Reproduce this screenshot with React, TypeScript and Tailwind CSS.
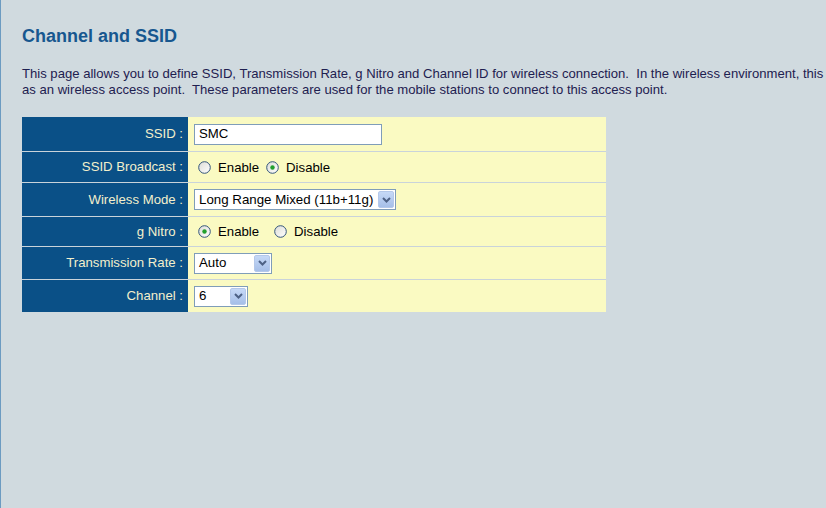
import React from 'react';

const font = "font-['Liberation_Sans',Arial,sans-serif]";

function Radio({ checked }: { checked?: boolean }) {
  return (
    <svg width="13" height="13" viewBox="0 0 13 13" className="shrink-0">
      <defs>
        <linearGradient id="rfill" x1="0" y1="0" x2="1" y2="1">
          <stop offset="0" stopColor="#dcdcd6" />
          <stop offset="1" stopColor="#ffffff" />
        </linearGradient>
      </defs>
      <circle cx="6.5" cy="6.5" r="5.8" fill="url(#rfill)" stroke="#33557a" strokeWidth="1" />
      {checked && <circle cx="6.5" cy="6.5" r="2.2" fill="#22a02c" />}
    </svg>
  );
}

function DropButton() {
  return (
    <div className="flex h-[17px] w-[16px] items-center justify-center rounded-[2px] border border-[#b4c8ea] bg-gradient-to-b from-[#c6d9f7] to-[#a6bfe8]">
      <svg width="9" height="6" viewBox="0 0 9 6">
        <path d="M1 1 L4.5 4.5 L8 1" fill="none" stroke="#4d6185" strokeWidth="2" />
      </svg>
    </div>
  );
}

function Select({ value, width }: { value: string; width: string }) {
  return (
    <div className={`flex h-[21px] items-center justify-between border border-[#7f9db9] bg-white pl-[4px] pr-[1px] ${width}`}>
      <span className="whitespace-nowrap text-[13.3px] leading-none text-black">{value}</span>
      <DropButton />
    </div>
  );
}

const rows = [
  { label: 'SSID :', h: 'h-[34px]', kind: 'text' },
  { label: 'SSID Broadcast :', h: 'h-[30px]', kind: 'broadcast' },
  { label: 'Wireless Mode :', h: 'h-[33px]', kind: 'mode' },
  { label: 'g Nitro :', h: 'h-[29px]', kind: 'nitro' },
  { label: 'Transmission Rate :', h: 'h-[32px]', kind: 'rate' },
  { label: 'Channel :', h: 'h-[32px]', kind: 'channel' },
];

function Control({ kind }: { kind: string }) {
  if (kind === 'text')
    return (
      <div className="flex h-[21px] w-[188px] items-center border border-[#7f9db9] bg-white pl-[4px] text-[13.2px] text-black">
        SMC
      </div>
    );
  if (kind === 'broadcast')
    return (
      <div className="flex items-center pl-[4px] pt-[1px] text-[13.2px] text-black">
        <Radio />
        <span className="ml-[7px]">Enable</span>
        <span className="ml-[7px]"><Radio checked /></span>
        <span className="ml-[7px]">Disable</span>
      </div>
    );
  if (kind === 'nitro')
    return (
      <div className="flex items-center pl-[4px] text-[13.2px] text-black">
        <Radio checked />
        <span className="ml-[7px]">Enable</span>
        <span className="ml-[15px]"><Radio /></span>
        <span className="ml-[7px]">Disable</span>
      </div>
    );
  if (kind === 'mode') return <Select value="Long Range Mixed (11b+11g)" width="w-[202px]" />;
  if (kind === 'rate') return <Select value="Auto" width="w-[78px]" />;
  return <Select value="6" width="w-[54px]" />;
}

export default function App() {
  return (
    <div className={`h-[508px] w-[826px] overflow-hidden border-l border-[#6c9bc1] bg-[#d0dadf] ${font}`}>
      <div className="pl-[21px] pt-[25px]">
        <h1 className="text-[18px] font-bold leading-[22px] text-[#17578f]">Channel and SSID</h1>
        <p className="mt-[19px] whitespace-nowrap text-[13.1px] leading-[16px] text-[#1e2050]">
          This page allows you to define SSID, Transmission Rate, g Nitro and Channel ID for wireless connection.{'\u00a0 '}In the wireless environment, this B
          <br />
          as an wireless access point.{'\u00a0 '}These parameters are used for the mobile stations to connect to this access point.
        </p>
        <div className="mt-[19px] flex w-[584px] flex-col">
          {rows.map((r, i) => (
            <div key={r.label} className={`box-content flex ${r.h} ${i > 0 ? 'border-t border-[#c9d3da]' : ''}`}>
              <div className="flex w-[166px] items-center justify-end bg-[#0a5087] pr-[5px] text-[13.2px] text-[#f3efcc]">
                {r.label}
              </div>
              <div className="flex flex-1 items-center bg-[#fafac2] pl-[6px]">
                <Control kind={r.kind} />
              </div>
            </div>
          ))}
        </div>
      </div>
    </div>
  );
}
